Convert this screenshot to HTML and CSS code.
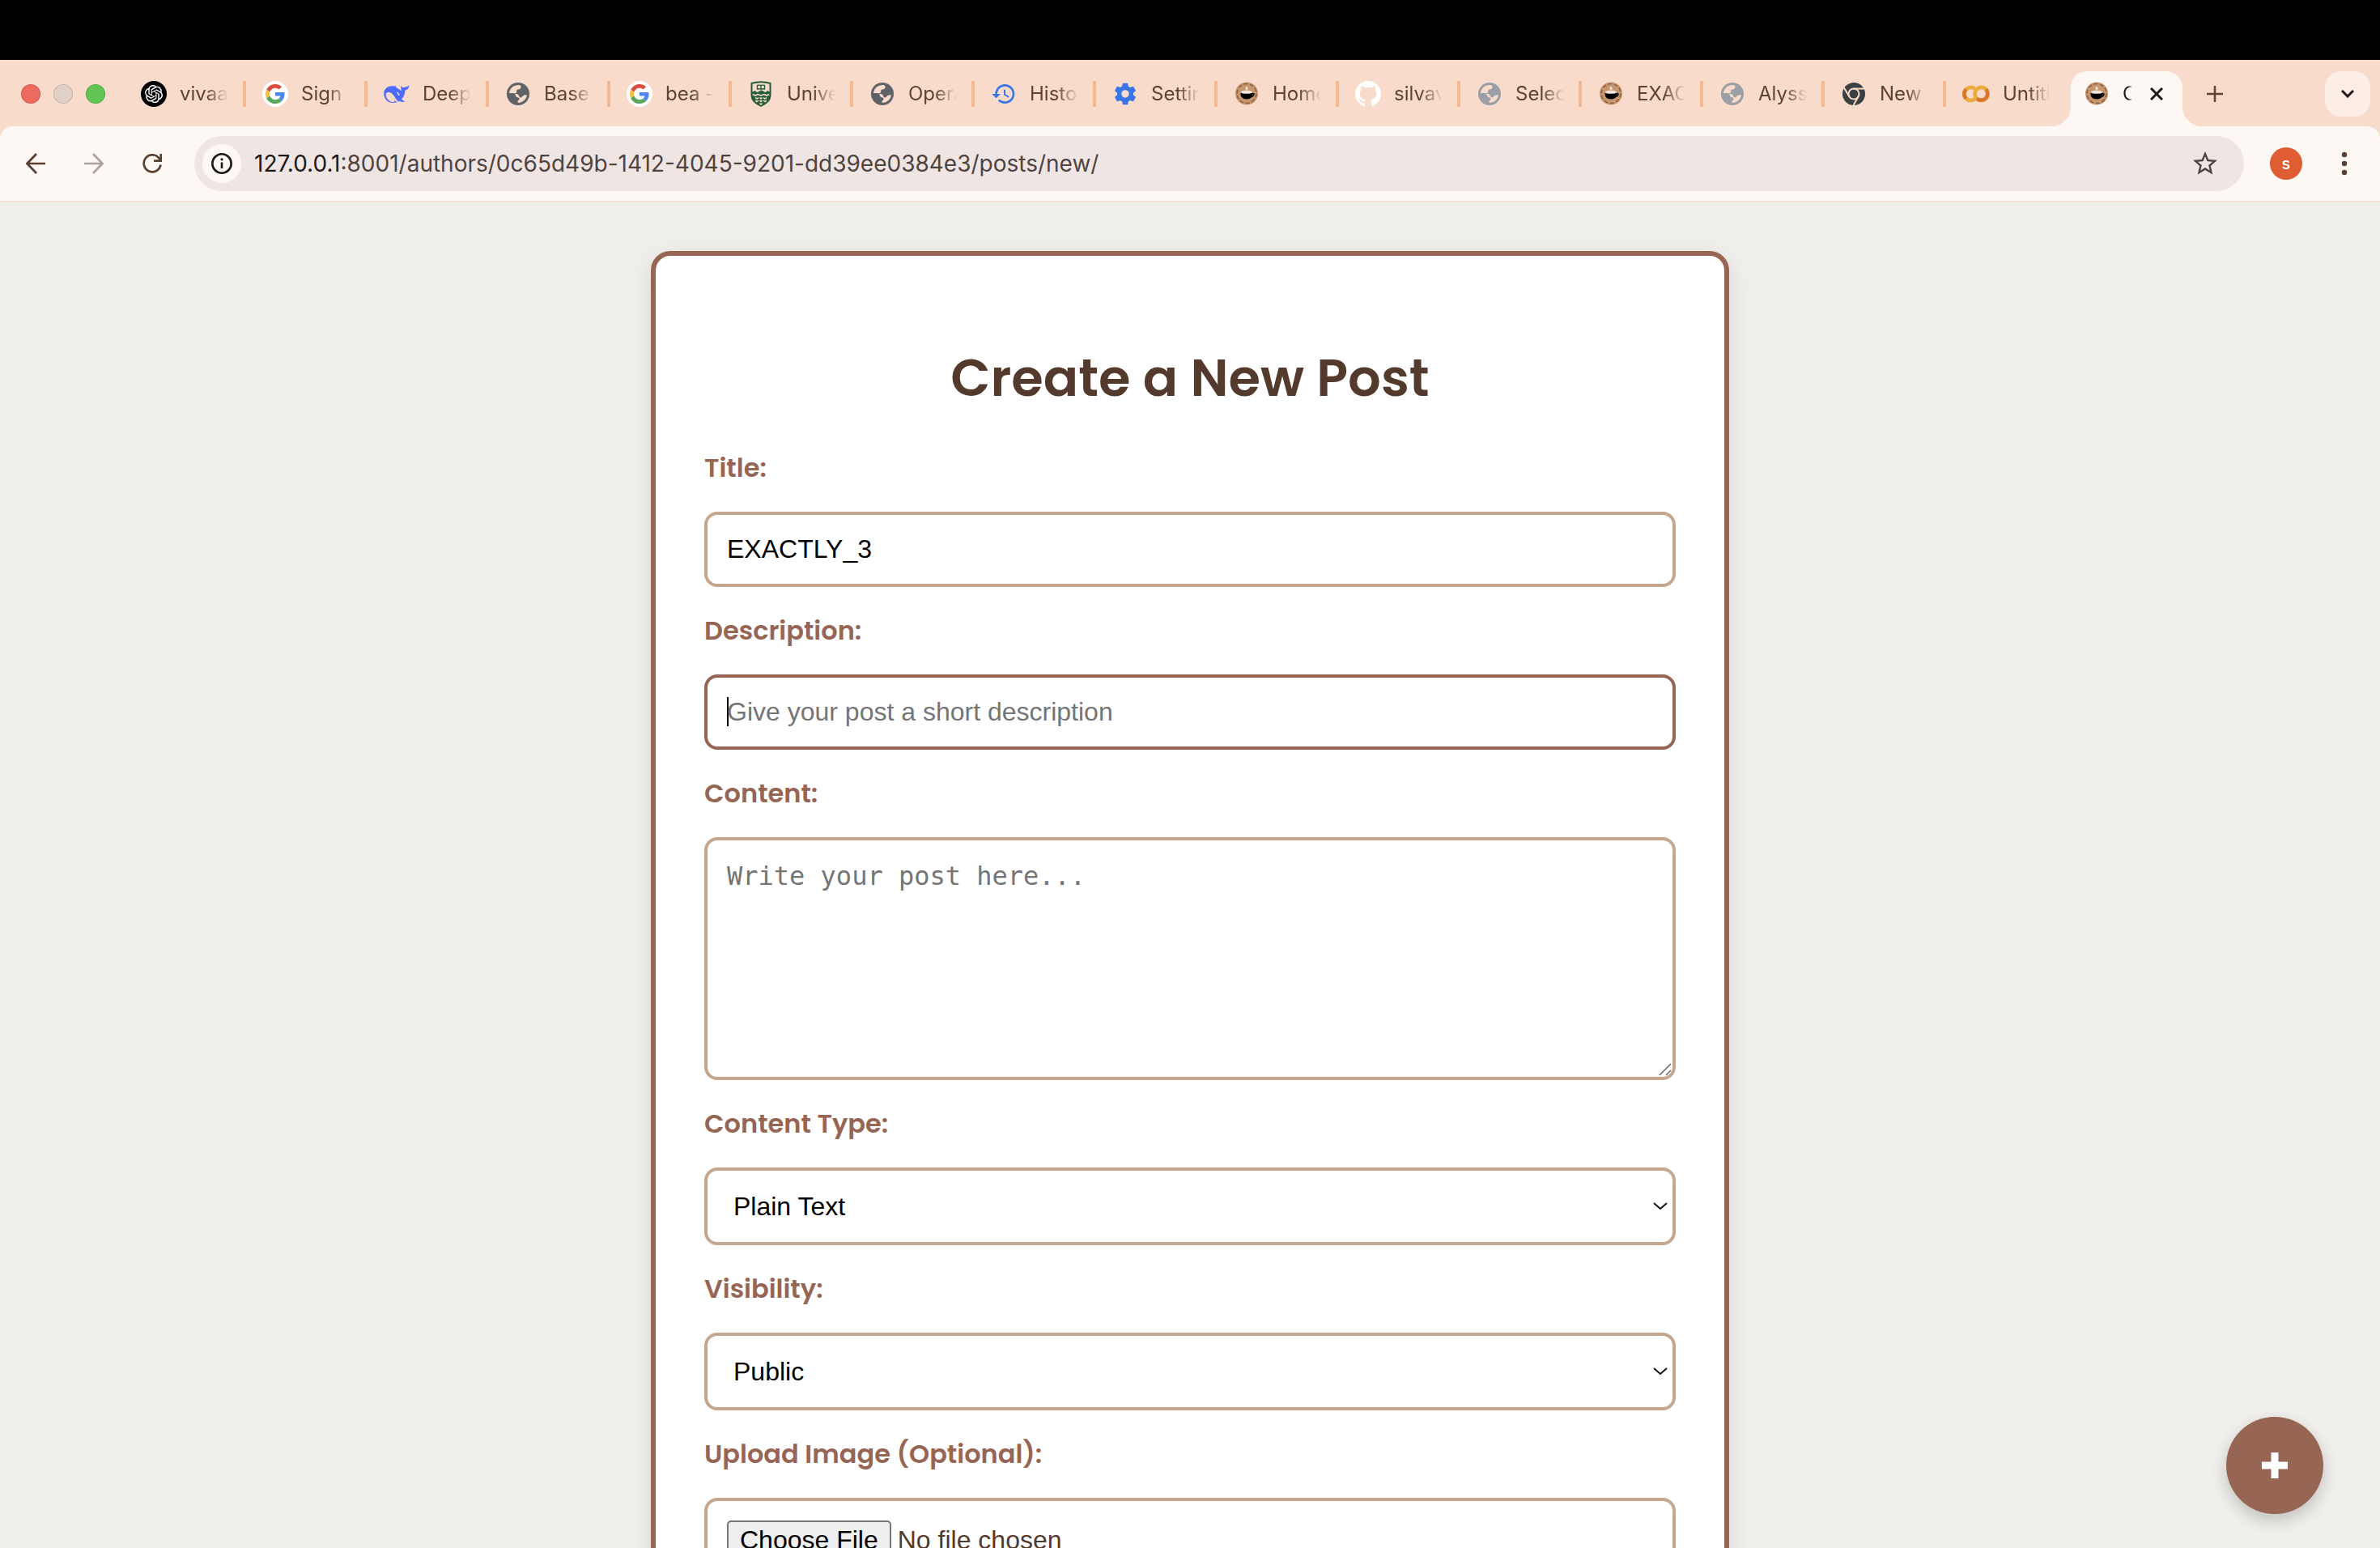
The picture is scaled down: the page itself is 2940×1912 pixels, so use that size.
FILE: index.html
```html
<!DOCTYPE html>
<html lang="en">
<head>
<meta charset="utf-8">
<meta name="viewport" content="width=device-width, initial-scale=1">
<title>Create a New Post</title>
<link rel="stylesheet" href="styles.css">
</head>
<body>
<svg class="sprite" aria-hidden="true">
  <symbol id="i-google" viewBox="0 0 32 32">
    <circle cx="16" cy="16" r="16" fill="#fff"/>
    <g transform="translate(4 4) scale(.5)">
      <path fill="#db4e3f" d="M24 9.5c3.54 0 6.71 1.22 9.21 3.6l6.85-6.85C35.9 2.38 30.47 0 24 0 14.62 0 6.51 5.38 2.56 13.22l7.98 6.19C12.43 13.72 17.74 9.5 24 9.5z"/>
      <path fill="#4f86ec" d="M46.98 24.55c0-1.57-.15-3.09-.38-4.55H24v9.02h12.94c-.58 2.96-2.26 5.48-4.78 7.18l7.73 6c4.51-4.18 7.09-10.36 7.09-17.65z"/>
      <path fill="#f2be42" d="M10.53 28.59c-.48-1.45-.76-2.99-.76-4.59s.27-3.14.76-4.59l-7.98-6.19C.92 16.46 0 20.12 0 24c0 3.88.92 7.54 2.56 10.78l7.97-6.19z"/>
      <path fill="#58a55c" d="M24 48c6.48 0 11.93-2.13 15.89-5.81l-7.73-6c-2.15 1.45-4.92 2.3-8.16 2.3-6.26 0-11.57-4.22-13.47-9.91l-7.98 6.19C6.51 42.62 14.62 48 24 48z"/>
    </g>
  </symbol>
  <symbol id="i-globe" viewBox="0 0 32 32">
    <circle cx="16" cy="16" r="14" fill="currentColor"/>
    <path fill="#f9dbcc" d="M5 15C5.500 9 10.500 4.800 17.500 5l2 1.200c.5 2.800-1 4-3.500 4.300-1.500.2-2 1-1.800 2.500.2 1.300-.7 2-2.200 2.200v.8h2c3.500 0 2.500 4 5 4.500 1.500.3 2-1.500 3.500-2.500 1.300-.8 3-1 4.400-.5-.6 5-5 9-9.900 9.400l-1.500-.4c-.4-2.500 2-2.500 2-4.500 0-1.300-1-1.800-2.500-1.800-2.500 0-1-3.800-4.500-5.200z"/>
  </symbol>
  <symbol id="i-coffee" viewBox="0 0 32 32">
    <circle cx="16" cy="15.500" r="14" fill="#c6966f"/>
    <circle cx="16" cy="15.500" r="12" fill="none" stroke="#8a6040" stroke-width="1.500" stroke-dasharray="5 2.500"/>
    <circle cx="16" cy="15.500" r="9.500" fill="#c6966f"/>
    <ellipse cx="16" cy="14.500" rx="7.500" ry="3" fill="#f1e4da"/>
    <path d="M8.500 14.500c3 1.800 12 1.800 15 0 .6 5-2.500 8-7.500 8s-8.100-3-7.500-8z" fill="#000"/>
    <path d="M23 15.500c3-1 2.500 3.500-1 4" fill="none" stroke="#000" stroke-width="1.400"/>
    <path d="M16 7v4M14.500 9h3" stroke="#f4ebe4" stroke-width="1.600"/>
  </symbol>
</svg>

<div class="window">
  <div class="menubar"></div>

  <header class="chrome">
    <div class="strip">
      <div class="lights">
        <button class="light light-close" aria-label="Close window"></button>
        <button class="light light-min" aria-label="Minimize window"></button>
        <button class="light light-max" aria-label="Zoom window"></button>
      </div>
      <nav class="tabs" aria-label="Tabs">
        <a class="tab" href="#"><svg class="fav" viewBox="0 0 32 32"><circle cx="16" cy="16" r="16"/><path transform="translate(5 5) scale(.92)" fill="#fff" d="M22.2819 9.8211a5.9847 5.9847 0 0 0-.5157-4.9108 6.0462 6.0462 0 0 0-6.5098-2.9A6.0651 6.0651 0 0 0 4.9807 4.1818a5.9847 5.9847 0 0 0-3.9977 2.9 6.0462 6.0462 0 0 0 .7427 7.0966 5.98 5.98 0 0 0 .511 4.9107 6.051 6.051 0 0 0 6.5146 2.9001A5.9847 5.9847 0 0 0 13.2599 24a6.0557 6.0557 0 0 0 5.7718-4.2058 5.9894 5.9894 0 0 0 3.9977-2.9001 6.0557 6.0557 0 0 0-.7475-7.0729zm-9.022 12.6081a4.4755 4.4755 0 0 1-2.8764-1.0408l.1419-.0804 4.7783-2.7582a.7948.7948 0 0 0 .3927-.6813v-6.7369l2.02 1.1686a.071.071 0 0 1 .038.052v5.5826a4.504 4.504 0 0 1-4.4945 4.4944zm-9.6607-4.1254a4.4708 4.4708 0 0 1-.5346-3.0137l.142.0852 4.783 2.7582a.7712.7712 0 0 0 .7806 0l5.8428-3.3685v2.3324a.0804.0804 0 0 1-.0332.0615L9.74 19.9502a4.4992 4.4992 0 0 1-6.1408-1.6464zM2.3408 7.8956a4.485 4.485 0 0 1 2.3655-1.9728V11.6a.7664.7664 0 0 0 .3879.6765l5.8144 3.3543-2.0201 1.1685a.0757.0757 0 0 1-.071 0l-4.8303-2.7865A4.504 4.504 0 0 1 2.3408 7.872zm16.5963 3.8558L13.1038 8.364 15.1192 7.2a.0757.0757 0 0 1 .071 0l4.8303 2.7913a4.4944 4.4944 0 0 1-.6765 8.1042v-5.6772a.79.79 0 0 0-.407-.667zm2.0107-3.0231l-.142-.0852-4.7735-2.7818a.7759.7759 0 0 0-.7854 0L9.409 9.2297V6.8974a.0662.0662 0 0 1 .0284-.0615l4.8303-2.7866a4.4992 4.4992 0 0 1 6.6802 4.66zM8.3065 12.863l-2.02-1.1638a.0804.0804 0 0 1-.038-.0567V6.0742a4.4992 4.4992 0 0 1 7.3757-3.4537l-.142.0805L8.704 5.459a.7948.7948 0 0 0-.3927.6813zm1.0976-2.3654l2.602-1.4998 2.6069 1.4998v2.9994l-2.5974 1.4997-2.6067-1.4997Z"/></svg><span class="tab-title">vivaa</span></a>
        <a class="tab" href="#"><svg class="fav"><use href="#i-google"/></svg><span class="tab-title">Sign</span></a>
        <a class="tab" href="#"><svg class="fav" viewBox="0 0 32 32"><path fill="#4d6bfe" d="M31.500 5.500c-.4 3.500-2.200 5.500-5 6-.2 4.500-1.800 8.200-4.500 11 1 1.200 2.500 2.200 4.500 2.700-2.500 1.200-5.300.8-7.300-.4C11.500 29.500 2 26.500.5 18 -.7 11 3.500 6.500 10 6.300c2.500-.1 3.200.6 4.500-.5.400 1 .3 2 1.500 2.700 2 1.200 4 2.200 5.500 4 .4-2.500-.2-4.300-1-6.500 1.500.7 2.600 1.500 3.500 2.500 1.500-1.600 3.700-1 4.500-1.300z"/><path fill="#f9dbcc" d="M2.800 15.500c1.700-2 5-2 7.500.2 3.200 2.800 4.500 7 7.700 9.600-1.800.8-3.200.3-5-1.700.2 1.400.8 2.100-.2 2.500C7 26.500 2 21.500 2.800 15.500z"/><path fill="#f9dbcc" d="M15.500 14c2-.5 4.500 1.600 4 3.500-.3 1-1.300.6-1.500-.3-.3-1.400-1.300-2.200-2.500-3.200z"/></svg><span class="tab-title">Deep</span></a>
        <a class="tab" href="#"><svg class="fav fav-dark"><use href="#i-globe"/></svg><span class="tab-title">Base</span></a>
        <a class="tab" href="#"><svg class="fav"><use href="#i-google"/></svg><span class="tab-title">bea -</span></a>
        <a class="tab" href="#"><svg class="fav" viewBox="0 0 32 32"><path d="M3.500 2Q16-1.500 28.500 2v16c0 7-6.500 11-12.500 14C10 29 3.500 25 3.500 18z" fill="#275d38"/><path d="M5.500 3.800Q16 .8 26.500 3.800v9.700l-2-1.500-3 2-5-2.800-5 2.800-3-2-3 1.500z" fill="#f9dbcc"/><path d="M11.500 5.500q2.500-.8 4.500 0 2-.8 4.500 0v4.500q-2.500-.7-4.500.2-2-.9-4.500-.2zM16 5.500v4.700" fill="none" stroke="#275d38" stroke-width="1.400"/><path d="M6 16.500l3 1.500 3-1.500 4 1.500 4-1.500 3 1.500 3-1.500" fill="none" stroke="#f9dbcc" stroke-width="1.600"/><path d="M9 20.500l2 1.500 2-1.500M9 24l2 1.500 2-1.500M14.500 20.500L16 22l1.500-1.500M14.500 24l1.500 1.500 1.500-1.500M14.500 27.500L16 29l1.500-1.500M19 20.500l2 1.500 2-1.500M19 24l2 1.500 2-1.500" fill="none" stroke="#f9dbcc" stroke-width="1.500"/></svg><span class="tab-title">Unive</span></a>
        <a class="tab" href="#"><svg class="fav fav-dark"><use href="#i-globe"/></svg><span class="tab-title">Opera</span></a>
        <a class="tab" href="#"><svg class="fav fav-blue" viewBox="0 0 24 24"><path d="M13 3c-4.970 0-9 4.030-9 9H1l3.890 3.890.07.14L9 12H6c0-3.870 3.130-7 7-7s7 3.130 7 7-3.130 7-7 7c-1.930 0-3.680-.79-4.940-2.060l-1.420 1.420C8.270 19.990 10.510 21 13 21c4.970 0 9-4.030 9-9s-4.030-9-9-9zm-1 5v5l4.280 2.540.72-1.210-3.500-2.080V8H12z"/></svg><span class="tab-title">Histo</span></a>
        <a class="tab" href="#"><svg class="fav fav-blue" viewBox="0 0 24 24"><path d="M19.430 12.980c.04-.32.070-.64.070-.98s-.03-.66-.07-.98l2.110-1.650c.19-.15.240-.42.120-.64l-2-3.460c-.12-.22-.39-.3-.61-.22l-2.490 1c-.52-.4-1.080-.73-1.690-.98l-.38-2.650C14.460 2.180 14.250 2 14 2h-4c-.25 0-.46.180-.49.420l-.38 2.650c-.61.250-1.170.59-1.690.98l-2.490-1c-.23-.09-.49 0-.61.220l-2 3.460c-.13.220-.07.490.12.640l2.110 1.650c-.04.320-.07.650-.07.980s.03.660.07.980l-2.110 1.650c-.19.150-.24.420-.12.640l2 3.460c.12.220.39.300.61.220l2.490-1c.52.400 1.080.730 1.690.980l.38 2.650c.03.240.24.420.49.420h4c.25 0 .46-.18.490-.42l.38-2.650c.61-.25 1.170-.59 1.690-.98l2.490 1c.23.090.49 0 .61-.22l2-3.460c.12-.22.070-.49-.12-.64l-2.110-1.650zM12 15.500c-1.930 0-3.500-1.570-3.500-3.500s1.570-3.500 3.500-3.500 3.500 1.570 3.500 3.500-1.570 3.500-3.500 3.500z"/></svg><span class="tab-title">Settin</span></a>
        <a class="tab" href="#"><svg class="fav"><use href="#i-coffee"/></svg><span class="tab-title">Home</span></a>
        <a class="tab" href="#"><svg class="fav" viewBox="0 0 16 16"><path fill="#fff" d="M8 0c4.420 0 8 3.580 8 8a8.013 8.013 0 0 1-5.450 7.590c-.4.080-.55-.17-.55-.38 0-.27.010-1.130.010-2.200 0-.75-.25-1.230-.54-1.480 1.780-.2 3.650-.88 3.650-3.950 0-.88-.31-1.590-.82-2.150.08-.2.360-1.020-.08-2.120 0 0-.67-.22-2.200.82-.64-.18-1.320-.27-2-.27-.68 0-1.360.09-2 .27-1.530-1.030-2.200-.82-2.200-.82-.44 1.100-.16 1.920-.08 2.120-.51.560-.82 1.280-.82 2.150 0 3.060 1.860 3.750 3.640 3.950-.23.200-.44.550-.51 1.070-.46.210-1.610.550-2.330-.66-.15-.24-.6-.83-1.230-.82-.67.010-.27.380.010.530.34.190.73.900.82 1.130.16.450.68 1.310 2.690.940 0 .67.010 1.300.010 1.490 0 .21-.15.450-.55.380A7.995 7.995 0 0 1 0 8c0-4.420 3.580-8 8-8Z"/></svg><span class="tab-title">silvav</span></a>
        <a class="tab" href="#"><svg class="fav fav-light"><use href="#i-globe"/></svg><span class="tab-title">Selec</span></a>
        <a class="tab" href="#"><svg class="fav"><use href="#i-coffee"/></svg><span class="tab-title">EXAC</span></a>
        <a class="tab" href="#"><svg class="fav fav-light"><use href="#i-globe"/></svg><span class="tab-title">Alyss</span></a>
        <a class="tab" href="#"><svg class="fav" viewBox="0 0 32 32"><circle cx="16" cy="16" r="14" fill="#3c4043"/><g stroke="#f9dbcc" stroke-width="2" fill="none"><circle cx="16" cy="16" r="6.500"/><path d="M16 9.500h13M10.400 19.300L4 8.500M21.600 19.300L15.500 30"/></g></svg><span class="tab-title">New</span></a>
        <a class="tab" href="#"><svg class="fav fav-wide" viewBox="0 0 36 32"><g fill="none" stroke-width="5"><path d="M16.500 9.500A8.500 8.500 0 1 0 16.500 22.500" stroke="#e9ab3b"/><path d="M5 10A8.500 8.500 0 0 0 5 22" stroke="#d97730"/><circle cx="25" cy="16" r="8.500" stroke="#e9ab3b"/><path d="M31 10A8.500 8.500 0 0 1 19 22" stroke="#d97730"/></g></svg><span class="tab-title">Untitl</span></a>
        <div class="tab-active">
          <svg class="fav"><use href="#i-coffee"/></svg>
          <span class="tab-title">C</span>
          <button class="icon-btn" aria-label="Close tab"><svg width="16" height="16" viewBox="0 0 16 16"><path d="M1 1l14 14M15 1L1 15" stroke="#1f1a17" stroke-width="3"/></svg></button>
        </div>
      </nav>
      <button class="icon-btn new-tab" aria-label="New tab"><svg width="20" height="20" viewBox="0 0 20 20"><path d="M10 0v20M0 10h20" stroke="#5a4535" stroke-width="2.500"/></svg></button>
      <button class="icon-btn tab-search" aria-label="Search tabs"><svg width="16" height="10" viewBox="0 0 16 10"><path d="M1 1l7 7 7-7" fill="none" stroke="#1f1a17" stroke-width="3"/></svg></button>
    </div>

    <div class="toolbar">
      <div class="nav-buttons">
        <button class="icon-btn" aria-label="Back"><svg width="24" height="28" viewBox="0 -2 24 28"><path d="M24 12H2M13 0L1.500 12 13 24" fill="none" stroke="#5a4030" stroke-width="2.700"/></svg></button>
        <button class="icon-btn" aria-label="Forward"><svg width="24" height="28" viewBox="0 -2 24 28"><path d="M0 12h22M11 0l11.500 12L11 24" fill="none" stroke="#aca39e" stroke-width="2.700"/></svg></button>
        <button class="icon-btn" aria-label="Reload"><svg width="24" height="24" viewBox="0 0 24 24"><path d="M22.500 13.500A10.500 10.500 0 1 1 20 4.800L22.500 8" fill="none" stroke="#5a4030" stroke-width="2.700"/><path d="M22.700 0v8.700H14" fill="none" stroke="#5a4030" stroke-width="2.700"/></svg></button>
      </div>
      <div class="omnibox">
        <button class="icon-btn site-info" aria-label="View site information"><svg width="26" height="26" viewBox="0 0 26 26"><circle cx="13" cy="13" r="11.700" fill="none" stroke="#1f1a17" stroke-width="2.600"/><path d="M13 11.500v7.500" stroke="#1f1a17" stroke-width="2.600"/><circle cx="13" cy="7.800" r="1.600" fill="#1f1a17"/></svg></button>
        <div class="url" role="textbox" aria-label="Address" contenteditable="true" spellcheck="false"><span class="host">127.0.0.1</span>:8001/authors/0c65d49b-1412-4045-9201-dd39ee0384e3/posts/new/</div>
        <button class="icon-btn" aria-label="Bookmark this tab"><svg width="36" height="36" viewBox="0 0 24 24"><path fill="#4f4340" d="M22 9.240l-7.190-.62L12 2 9.190 8.630 2 9.240l5.460 4.730L5.820 21 12 17.270 18.180 21l-1.630-7.030L22 9.240zM12 15.400l-3.760 2.270 1-4.280-3.320-2.880 4.380-.38L12 6.100l1.710 4.040 4.380.38-3.320 2.880 1 4.280L12 15.400z"/></svg></button>
      </div>
      <button class="icon-btn avatar" aria-label="Profile">s</button>
      <button class="icon-btn" aria-label="Menu"><svg width="8" height="30" viewBox="0 0 8 30" fill="#5a4030"><circle cx="4" cy="4" r="3.200"/><circle cx="4" cy="15" r="3.200"/><circle cx="4" cy="26" r="3.200"/></svg></button>
    </div>
  </header>

  <main class="page">
    <form class="card">
      <h1>Create a New Post</h1>
      <div class="field">
        <label for="title">Title:</label>
        <input id="title" class="control" type="text" value="EXACTLY_3">
      </div>
      <div class="field">
        <label for="description">Description:</label>
        <input id="description" class="control is-focused" type="text" placeholder="Give your post a short description">
      </div>
      <div class="field">
        <label for="content">Content:</label>
        <textarea id="content" class="control" placeholder="Write your post here..."></textarea>
      </div>
      <div class="field">
        <label for="type">Content Type:</label>
        <select id="type" class="control"><option>Plain Text</option><option>Markdown</option></select>
      </div>
      <div class="field">
        <label for="visibility">Visibility:</label>
        <select id="visibility" class="control"><option>Public</option><option>Unlisted</option></select>
      </div>
      <div class="field">
        <label for="image">Upload Image (Optional):</label>
        <input id="image" class="control" type="file">
      </div>
    </form>
    <button class="fab" type="button" aria-label="New post"><svg width="32" height="32" viewBox="0 0 32 32"><path d="M16 0v32M0 16h32" stroke="#fff" stroke-width="9"/></svg></button>
  </main>
</div>
</body>
</html>
```
FILE: styles.css
```css
* { box-sizing: border-box; }

body {
  margin: 0;
  font-family: Inter, "Liberation Sans", sans-serif;
  color: #533a2d;
  background: #f0efeb;
}

.sprite { position: absolute; width: 0; height: 0; }

.window {
  display: flex;
  flex-direction: column;
  height: 100vh;
  overflow: hidden;
}

.menubar { flex: none; height: 74px; background: #000; }

/* Browser frame */
.chrome { flex: none; background: #f9dbcc; }

.strip {
  display: flex;
  align-items: center;
  height: 82px;
  padding: 14px 12px 12px 26px;
}

.lights { display: flex; gap: 16px; margin-right: 24px; }
.light {
  width: 24px;
  height: 24px;
  padding: 0;
  border: 1px solid #00000022;
  border-radius: 50%;
}
.light-close { background: #ec6a5e; }
.light-min { background: #e0d0c7; }
.light-max { background: #61c554; }

.icon-btn {
  display: flex;
  flex: none;
  align-items: center;
  justify-content: center;
  padding: 0;
  border: 0;
  background: none;
}

.tabs {
  display: flex;
  align-items: center;
  min-width: 0;
  font-size: 24px;
  line-height: 32px;
}
.tab {
  display: flex;
  width: 150px;
  gap: 16px;
  min-width: 0;
  padding: 0 18px 0 20px;
  border-right: 4px solid #f6b893;
  color: #5a4535;
  text-decoration: none;
}
.tab:nth-last-child(2) { border-color: transparent; }
.tab-title {
  flex: 1;
  min-width: 0;
  overflow: hidden;
  white-space: nowrap;
  mask-image: linear-gradient(to right, #000 55%, transparent);
}
.fav { flex: none; width: 32px; height: 32px; }
.fav-wide { width: 34px; }
.fav-dark { color: #5f6368; }
.fav-light { color: #9aa0a6; }
.fav-blue { fill: #3a75e8; }

.tab-active {
  position: relative;
  display: flex;
  flex: none;
  align-items: center;
  width: 138px;
  height: 68px;
  margin: 0 0 -12px 4px;
  padding: 0 24px 12px 16px;
  border-radius: 20px 20px 0 0;
  background: #fef8f4;
  color: #1f1a17;
}
.tab-active::before,
.tab-active::after {
  content: "";
  position: absolute;
  bottom: 0;
  width: 24px;
  height: 24px;
}
.tab-active::before {
  right: 100%;
  background: radial-gradient(circle at 0 0, transparent 24px, #fef8f4 24px);
}
.tab-active::after {
  left: 100%;
  background: radial-gradient(circle at 100% 0, transparent 24px, #fef8f4 24px);
}
.tab-active .tab-title {
  flex: none;
  width: 12px;
  margin: 0 22px 0 16px;
}

.new-tab { margin-left: 30px; }
.tab-search {
  width: 56px;
  height: 56px;
  margin-left: auto;
  border-radius: 20px;
  background: #fceee7;
}

.toolbar {
  display: flex;
  align-items: center;
  gap: 32px;
  height: 94px;
  padding: 0 40px 0 32px;
  border-bottom: 2px solid #f1dfd6;
  border-radius: 16px 16px 0 0;
  background: #fef8f4;
}
.nav-buttons { display: flex; gap: 48px; margin-right: 8px; }

.omnibox {
  display: flex;
  flex: 1;
  align-items: center;
  gap: 16px;
  min-width: 0;
  height: 68px;
  padding: 0 30px 0 10px;
  border-radius: 34px;
  background: #efe6e4;
}
.site-info {
  width: 48px;
  height: 48px;
  border-radius: 50%;
  background: #fef8f4;
}
.url {
  flex: 1;
  min-width: 0;
  overflow: hidden;
  font-size: 28px;
  line-height: 40px;
  white-space: nowrap;
  color: #4f4340;
}
.host { color: #1f1a17; }

.avatar {
  width: 40px;
  height: 40px;
  border-radius: 50%;
  background: #e05d33;
  color: #fff;
  font: 500 20px/40px Inter, sans-serif;
}
.avatar + .icon-btn { margin-left: 16px; }

/* Post form */
.page {
  flex: 1;
  min-height: 0;
  padding: 60px 24px;
  overflow: hidden;
}
.card {
  max-width: 1332px;
  margin: 0 auto;
  padding: 60px;
  border: 6px solid #966553;
  border-radius: 24px;
  background: #fff;
  box-shadow: 0 8px 30px #0000001a;
}
.card h1 {
  margin: 43px 0 37px;
  font: 600 64px/96px Poppins, Inter, sans-serif;
  text-align: center;
}
.field + .field { margin-top: 28px; }
.field label {
  display: block;
  margin-bottom: 28px;
  font: 600 32px/52px Poppins, Inter, sans-serif;
  color: #966553;
}
.control {
  display: block;
  width: 100%;
  padding: 24px;
  border: 4px solid #c4a78e;
  border-radius: 16px;
  outline: 0;
  background-color: #fff;
  color: #000;
  font: 32px/37px "Liberation Sans", Arial, sans-serif;
}
.control::placeholder { color: #757575; opacity: 1; }
.is-focused {
  border-color: #966553;
  background: #fff linear-gradient(#000, #000) 24px 24px / 2px 36px no-repeat;
}
textarea.control {
  height: 300px;
  resize: none;
  font-family: "DejaVu Sans Mono", monospace;
  line-height: 40px;
  background: #fff url('data:image/svg+xml,<svg xmlns="http://www.w3.org/2000/svg" width="16" height="16"><path d="M1 15L15 1M9 15l6-6" stroke="%23666" stroke-width="1.500"/></svg>') right 1px bottom 1px no-repeat;
}
select.control {
  height: 96px;
  padding: 0 32px;
  appearance: none;
  background: #fff url('data:image/svg+xml,<svg xmlns="http://www.w3.org/2000/svg" width="18" height="10"><path d="M1 1l8 7 8-7" fill="none" stroke="%23111" stroke-width="2"/></svg>') right 6px center no-repeat;
}
input[type="file"].control { color: #533a2d; line-height: 40px; }
.control::file-selector-button {
  margin-right: 8px;
  padding: 2px 14px;
  border: 2px solid #767676;
  border-radius: 5px;
  background: #efefef;
  color: #000;
  font: inherit;
}

.fab {
  position: fixed;
  right: 70px;
  bottom: 42px;
  display: flex;
  align-items: center;
  justify-content: center;
  width: 120px;
  height: 120px;
  border: 0;
  border-radius: 50%;
  background: #966553;
  box-shadow: 0 8px 20px #00000033;
}
```
